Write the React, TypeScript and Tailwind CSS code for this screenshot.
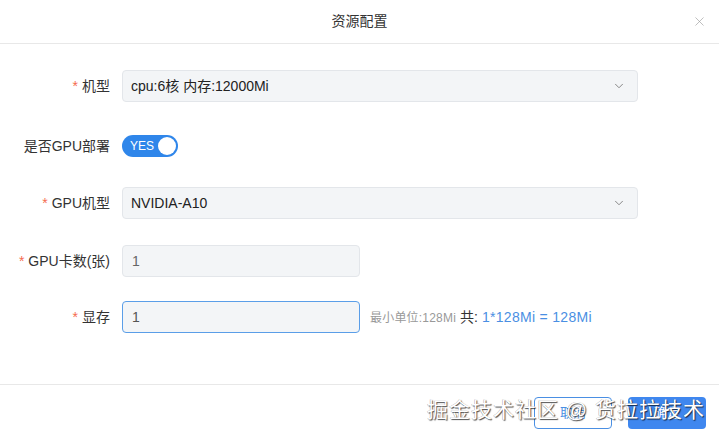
import React, { useState } from 'react'
import { ChevronDown, X } from 'lucide-react'

const font = "font-['Liberation_Sans','Noto_Sans_CJK_SC',sans-serif]"

function Label({ text, required }: { text: string; required?: boolean }) {
  return (
    <div className="w-[110px] shrink-0 text-right text-[14px] text-[#333]">
      {required && <span className="text-[#f56c50] mr-1">*</span>}
      {text}
    </div>
  )
}

function Select({ value }: { value: string }) {
  return (
    <div className="flex-1 max-w-[516px] h-[32px] flex items-center justify-between pl-[8px] pr-[9px] bg-[#f3f5f7] border border-[#e3e6ea] rounded-[4px]">
      <span className="text-[14px] text-[#222]">{value}</span>
      <ChevronDown size={14} strokeWidth={1.5} className="text-[#777] mr-[2px]" />
    </div>
  )
}

export default function App() {
  const [gpu, setGpu] = useState(true)
  const [mem, setMem] = useState('1')

  return (
    <div className={`relative w-[719px] h-[440px] bg-white flex flex-col ${font}`}>
      {/* header */}
      <div className="relative h-[44px] flex items-center justify-center border-b border-[#e8e8e8]">
        <span className="text-[14px] text-[#333]">资源配置</span>
        <X size={15} strokeWidth={1} className="absolute right-[12px] top-[14px] text-[#999]" />
      </div>

      {/* form */}
      <div className="flex-1 flex flex-col pt-[26px]">
        <div className="flex items-center gap-[12px] h-[32px]">
          <Label text="机型" required />
          <Select value="cpu:6核 内存:12000Mi" />
        </div>

        <div className="flex items-center gap-[12px] h-[22px] mt-[33px]">
          <Label text="是否GPU部署" />
          <button
            onClick={() => setGpu(!gpu)}
            className="w-[56px] h-[22px] rounded-full bg-[#2f86ea] flex items-center justify-between pl-[8px] pr-[2px]"
          >
            <span className="text-[12px] text-white">{gpu ? 'YES' : 'NO'}</span>
            <span className="w-[18px] h-[18px] rounded-full bg-white" />
          </button>
        </div>

        <div className="flex items-center gap-[12px] h-[32px] mt-[30px]">
          <Label text="GPU机型" required />
          <Select value="NVIDIA-A10" />
        </div>

        <div className="flex items-center gap-[12px] h-[32px] mt-[26px]">
          <Label text="GPU卡数(张)" required />
          <div className="w-[238px] h-[32px] flex items-center px-[9px] bg-[#f3f5f7] border border-[#e3e6ea] rounded-[4px] text-[14px] text-[#666]">
            1
          </div>
        </div>

        <div className="flex items-center gap-[12px] h-[32px] mt-[24px]">
          <Label text="显存" required />
          <input
            value={mem}
            onChange={(e) => setMem(e.target.value)}
            className="w-[238px] h-[32px] px-[9px] bg-[#f3f5f7] border border-[#5a9ee8] rounded-[4px] text-[14px] text-[#555] outline-none"
          />
          <div className="flex items-baseline gap-[4px] -ml-[2px]">
            <span className="text-[12px] text-[#999] tracking-[0.2px]">最小单位:128Mi</span>
            <span className="text-[14px] text-[#333]">共:</span>
            <span className="text-[14px] text-[#4a8fe3] tracking-[0.3px]">1*128Mi = 128Mi</span>
          </div>
        </div>
      </div>

      {/* footer */}
      <div className="h-[56px] border-t border-[#e8e8e8] flex items-center justify-end gap-[16px] pr-[13px]">
        <button className="w-[78px] h-[32px] rounded-[4px] border border-[#4a8fe3] text-[13px] text-[#4a8fe3] bg-white">
          取消
        </button>
        <button className="w-[78px] h-[32px] rounded-[4px] bg-[#3f87ef] text-[13px] text-white">
          确定
        </button>
      </div>

      {/* watermark */}
      <div className="absolute right-[14px] bottom-[15px] text-[21px] text-white tracking-[1px] [text-shadow:1px_1px_1px_rgba(0,0,0,0.7),-0.5px_-0.5px_0_rgba(0,0,0,0.35)] pointer-events-none">
        掘金技术社区 @ 货拉拉技术
      </div>
    </div>
  )
}
